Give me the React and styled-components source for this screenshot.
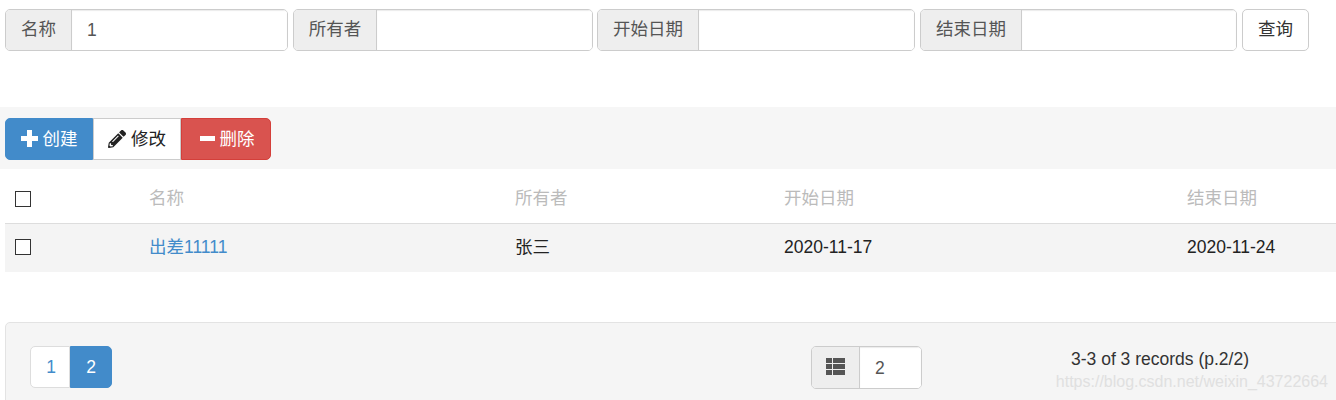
import React from "react";
import styled, { createGlobalStyle } from "styled-components";
import { FaPencilAlt } from "react-icons/fa";

const GlobalStyle = createGlobalStyle`
  html, body {
    margin: 0;
    padding: 0;
    height: 400px;
    overflow: hidden;
    background: #fff;
  }
  body, input, button, table {
    font-family: "Liberation Sans", "Noto Sans CJK SC", sans-serif;
    font-size: 17.5px;
    line-height: 24px;
    color: #333;
  }
`;

const Page = styled.div`
  position: relative;
  width: 1336px;
  height: 400px;
  overflow: hidden;
`;

const SearchBar = styled.form`
  display: flex;
  gap: 5px;
  height: 42px;
  padding: 9px 0 0 5px;
  margin: 0;
`;

const InputGroup = styled.div`
  display: flex;
  flex: none;
  box-sizing: border-box;
  width: ${(p) => p.$width}px;
  height: ${(p) => p.$height || 42}px;
  margin-left: ${(p) => p.$shift || 0}px;
  border: 1px solid #ccc;
  border-radius: 5px;
  overflow: hidden;
  background: #fff;
`;

const Addon = styled.span`
  display: flex;
  flex: none;
  align-items: center;
  justify-content: center;
  box-sizing: border-box;
  width: ${(p) => p.$width}px;
  padding-bottom: 2px;
  border-right: 1px solid #ccc;
  background: #eee;
  color: #555;
`;

const TextInput = styled.input`
  flex: 1;
  min-width: 0;
  padding: 0 15px;
  border: 0;
  outline: 0;
  box-shadow: inset 0 1px 1px rgba(0, 0, 0, 0.08);
  color: #555;
`;

const SearchButton = styled.button`
  box-sizing: border-box;
  width: 67px;
  height: 42px;
  padding: 0 0 2px;
  border: 1px solid #ccc;
  border-radius: 5px;
  background: #fff;
  color: #333;
`;

const Toolbar = styled.div`
  display: flex;
  align-items: flex-start;
  box-sizing: border-box;
  height: 62px;
  margin-top: 56px;
  padding: 11px 0 0 5px;
  background: #f6f6f6;
`;

const ToolButton = styled.button`
  display: flex;
  align-items: center;
  justify-content: center;
  gap: 5px;
  box-sizing: border-box;
  width: ${(p) => p.$width}px;
  height: 42px;
  padding: 0 0 1px ${(p) => p.$pad || 0}px;
  border: 1px solid ${(p) => p.$border};
  background: ${(p) => p.$bg};
  color: ${(p) => p.$color};
  &:first-child {
    border-radius: 5px 0 0 5px;
  }
  &:last-child {
    border-radius: 0 5px 5px 0;
  }
  svg {
    flex: none;
  }
`;

const Table = styled.table`
  width: 1331px;
  margin-left: 5px;
  border-collapse: collapse;
  table-layout: fixed;
`;

const HeadCell = styled.th`
  box-sizing: border-box;
  height: 54px;
  padding: 5px 0 0 ${(p) => p.$pad || 0}px;
  border-bottom: 1px solid #ddd;
  color: #bbb;
  font-weight: 400;
  text-align: left;
`;

const BodyRow = styled.tr`
  background: #f4f4f4;
`;

const BodyCell = styled.td`
  box-sizing: border-box;
  height: 49px;
  padding: 0 0 1px ${(p) => p.$pad || 0}px;
  color: #222;
`;

const RowLink = styled.a`
  color: #428bca;
  text-decoration: none;
`;

const Check = styled.span`
  display: block;
  box-sizing: border-box;
  width: 16px;
  height: 16px;
  margin-top: ${(p) => p.$top || 0}px;
  border: 1px solid #333;
  background: #fff;
`;

const Footer = styled.div`
  display: flex;
  box-sizing: border-box;
  width: 1340px;
  height: 100px;
  margin: 50px 0 0 5px;
  padding: 23px 0 0 24px;
  border: 1px solid #e3e3e3;
  border-radius: 5px;
  background: #f5f5f5;
`;

const Pagination = styled.div`
  display: flex;
  height: 42px;
`;

const PageItem = styled.a`
  display: flex;
  align-items: center;
  justify-content: center;
  box-sizing: border-box;
  width: ${(p) => p.$width}px;
  padding-left: ${(p) => (p.$active ? 0 : 2)}px;
  border: 1px solid ${(p) => (p.$active ? "#428bca" : "#ddd")};
  border-radius: ${(p) => (p.$active ? "0 5px 5px 0" : "5px 0 0 5px")};
  background: ${(p) => (p.$active ? "#428bca" : "#fff")};
  color: ${(p) => (p.$active ? "#fff" : "#428bca")};
`;

const PageSize = styled(InputGroup)`
  margin-left: 699px;
`;

const Summary = styled.div`
  margin: 1px 0 0 149px;
  color: #333;
`;

const Watermark = styled.span`
  position: absolute;
  right: 8px;
  bottom: 9px;
  color: #e0e0e0;
  font-size: 16px;
  line-height: 18px;
`;

function PlusIcon() {
  return (
    <svg width="17" height="17" viewBox="0 0 17 17" fill="currentColor">
      <path d="M6 0h5v6h6v5h-6v6H6v-6H0V6h6z" />
    </svg>
  );
}

function MinusIcon() {
  return (
    <svg width="15" height="5" viewBox="0 0 15 5" fill="currentColor">
      <rect width="15" height="5" />
    </svg>
  );
}

function ListIcon() {
  const rows = [0, 6, 12];
  return (
    <svg width="19" height="17" viewBox="0 0 19 17" fill="#555">
      {rows.map((y) => (
        <g key={y}>
          <rect y={y} width="6" height="5" />
          <rect x="7" y={y} width="12" height="5" />
        </g>
      ))}
    </svg>
  );
}

const columns = [
  { label: "名称", width: 144 },
  { label: "所有者", width: 366 },
  { label: "开始日期", width: 269 },
  { label: "结束日期", width: 403 },
];

export default function App() {
  return (
    <Page>
      <GlobalStyle />
      <SearchBar>
        <InputGroup $width={283}>
          <Addon $width={66}>名称</Addon>
          <TextInput defaultValue="1" />
        </InputGroup>
        <InputGroup $width={300}>
          <Addon $width={83}>所有者</Addon>
          <TextInput />
        </InputGroup>
        <InputGroup $width={318} $shift={-1}>
          <Addon $width={101}>开始日期</Addon>
          <TextInput />
        </InputGroup>
        <InputGroup $width={317}>
          <Addon $width={101}>结束日期</Addon>
          <TextInput />
        </InputGroup>
        <SearchButton type="button">查询</SearchButton>
      </SearchBar>

      <Toolbar>
        <ToolButton type="button" $width={88} $bg="#428bca" $border="#428bca" $color="#fff">
          <PlusIcon /> 创建
        </ToolButton>
        <ToolButton type="button" $width={88} $bg="#fff" $border="#ccc" $color="#222">
          <FaPencilAlt size={18} /> 修改
        </ToolButton>
        <ToolButton type="button" $width={90} $pad={2} $bg="#d9534f" $border="#d43f3a" $color="#fff">
          <MinusIcon /> 删除
        </ToolButton>
      </Toolbar>

      <Table>
        <colgroup>
          <col style={{ width: 144 }} />
          {columns.slice(1).map((c) => (
            <col key={c.label} style={{ width: c.width }} />
          ))}
          <col />
        </colgroup>
        <thead>
          <tr>
            <HeadCell $pad={10}>
              <Check $top={1} />
            </HeadCell>
            {columns.map((c) => (
              <HeadCell key={c.label}>{c.label}</HeadCell>
            ))}
          </tr>
        </thead>
        <tbody>
          <BodyRow>
            <BodyCell $pad={10}>
              <Check />
            </BodyCell>
            <BodyCell>
              <RowLink>出差11111</RowLink>
            </BodyCell>
            <BodyCell>张三</BodyCell>
            <BodyCell>2020-11-17</BodyCell>
            <BodyCell>2020-11-24</BodyCell>
          </BodyRow>
        </tbody>
      </Table>

      <Footer>
        <Pagination>
          <PageItem $width={40}>1</PageItem>
          <PageItem $width={42} $active>
            2
          </PageItem>
        </Pagination>
        <PageSize $width={111} $height={43}>
          <Addon $width={48}>
            <ListIcon />
          </Addon>
          <TextInput defaultValue="2" />
        </PageSize>
        <Summary>3-3 of 3 records (p.2/2)</Summary>
      </Footer>

      <Watermark>https://blog.csdn.net/weixin_43722664</Watermark>
    </Page>
  );
}
